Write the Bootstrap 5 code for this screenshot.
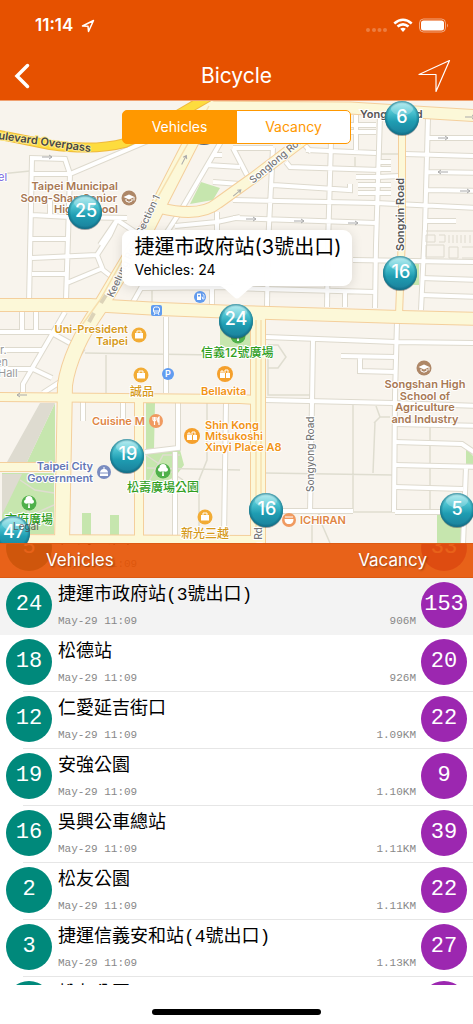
<!DOCTYPE html>
<html lang="zh-Hant">
<head>
<meta charset="utf-8">
<meta name="viewport" content="width=device-width, initial-scale=1">
<title>Bicycle</title>
<link href="https://cdn.jsdelivr.net/npm/bootstrap@5.3.0/dist/css/bootstrap.min.css" rel="stylesheet">
<style>
  body { font-family: Inter, "Noto Sans CJK TC", sans-serif; background: #fff; color: #000; }
  .topbar { background: #e65100; color: #fff; }
  .status { height: 52px; padding: 0 24px 0 35px; font-size: 17px; font-weight: 600; }
  .navrow { height: 48px; padding: 0 20px 0 12px; }
  .navrow h1 { font-size: 21px; font-weight: 400; line-height: 28px; }
  .iconbtn { width: 36px; height: 36px; line-height: 0; color: #fff; }
  .backbtn { width: 44px; }
  .mapbox { height: 443px; background: #f8f4ed; border-top: 1px solid #f0a070; }
  .mapart { width: 100%; height: 100%; }
  .switcher { top: 9px; left: 0; right: 0; margin: auto; width: 229px; height: 34px; z-index: 2; }
  .switcher .btn { --bs-btn-color: #ff9800; --bs-btn-border-color: #ff9800; --bs-btn-bg: #fff;
    --bs-btn-active-bg: #ff9800; --bs-btn-active-border-color: #ff9800; --bs-btn-active-color: #fff;
    --bs-btn-hover-color: #ff9800; --bs-btn-hover-border-color: #ff9800;
    width: 50%; padding: 0; font-size: 14px; line-height: 31px; border-radius: 5px; }
  .callout { top: 129px; left: 0; right: 0; margin: auto; width: 230px; height: 56px; padding: 4px 13px;
    background: rgba(255,255,255,.97); border-radius: 9px; box-shadow: 0 2px 12px rgba(0,0,0,.12); }
  .callout strong { display: block; font-weight: 400; font-size: 20px; line-height: 27px; white-space: nowrap; }
  .callout span { display: block; font-size: 14px; line-height: 18px; }
  .callout svg { top: 55px; left: 92px; }
  .listhead { height: 35px; background: rgba(230,81,0,.9); color: #fff; padding: 0 46px; font-size: 17px;
    text-shadow: 1px 1px 2px rgba(0,0,0,.35); border-bottom: 1px solid #dc5a14; border-top: 1px solid #dc5a14; z-index: 2; }
  .stations { font-family: "Liberation Mono", "Noto Sans CJK TC", monospace; scrollbar-width: none; min-height: 0; }
  .stations::-webkit-scrollbar { display: none; }
  .station { height: 57px; padding: 4px 6px 0; position: relative; }
  .station:first-child { margin-top: -22px; }
  .station::after { content: ""; position: absolute; left: 23px; right: 0; bottom: 0; height: 1px; background: #e6e6e6; }
  .station.chosen { background: #f3f3f3; }
  .station.chosen::after { display: none; }
  .disc { width: 46px; height: 46px; border-radius: 50%; color: #fff; font-size: 22px; line-height: 45px; text-align: center; }
  .bikes { background: #00897b; }
  .docks { background: #9c27b0; }
  .info { padding: 0 5px 0 6px; }
  .sname { font-size: 18px; line-height: 26px; margin-bottom: 6px; }
  .smeta { font-size: 11px; line-height: 14px; color: #888; }
  .homebar { height: 39px; }
  .homebar span { width: 169px; height: 6px; border-radius: 3px; background: #000; margin-top: 24px; }
  .case { stroke: #dedace; stroke-width: 6; }
  .lane { stroke: #fff; stroke-width: 4; }
  .lbl { font-size: 11px; font-weight: 600; paint-order: stroke; stroke: #fff; stroke-width: 2px; stroke-linejoin: round; }
  .cjk { font-size: 12px; font-weight: 500; }
  .street { font-size: 11px; font-weight: 500; fill: #777; paint-order: stroke; stroke: #fff; stroke-width: 2px; }
  .brown { fill: #a87853; } .gold { fill: #d69a1c; } .orange { fill: #f29314; } .green { fill: #2f9e1c; }
  .blue { fill: #6376b5; } .food { fill: #e08543; } .dim { fill: #999; font-weight: 400; }
  .pinnum { font-size: 18px; font-weight: 500; fill: #fff; text-anchor: middle; }
</style>
</head>
<body>
<div class="d-flex flex-column vh-100 overflow-hidden">
  <header class="topbar flex-shrink-0">
    <div class="status d-flex align-items-center justify-content-between">
      <div class="d-flex align-items-center gap-2"><span>11:14</span>
        <svg width="14" height="14" viewBox="0 0 14 14" fill="none" stroke="#fff" stroke-width="1.5" stroke-linejoin="round"><path d="M1.500 7 12.500 1.500 7.500 12.500 7 7.200Z"/></svg>
      </div>
      <svg width="84" height="18" viewBox="0 0 84 18">
        <g fill="#fff" opacity=".25"><circle cx="3" cy="13" r="2"/><circle cx="9" cy="13" r="2"/><circle cx="14.500" cy="13" r="2"/><circle cx="20" cy="13" r="2"/></g>
        <g fill="none" stroke="#fff" stroke-width="2.600"><path d="M29.300 6.500Q38 -1 46.700 6.500"/><path d="M32.500 9.600Q38 5 43.500 9.600"/></g><path d="M35.200 11.800Q38 9.700 40.800 11.800L38 15Z" fill="#fff"/>
        <rect x="54.500" y="2" width="26" height="13" rx="4" fill="none" stroke="#fff" stroke-opacity=".5"/><rect x="56" y="3.500" width="23" height="10" rx="2.500" fill="#fff"/><path d="M82 6.500v4q2-2 0-4" fill="#fff" opacity=".5"/>
      </svg>
    </div>
    <nav class="navrow d-flex align-items-center justify-content-between" aria-label="Main">
      <button class="iconbtn backbtn btn p-0 border-0 text-start" type="button" aria-label="Back"><svg width="20" height="26" viewBox="0 0 20 26" fill="none" stroke="#fff" stroke-width="3.500"><path d="M15.500 2.500 5 13 15.500 23.500" stroke-linecap="round"/></svg></button>
      <h1 class="m-0">Bicycle</h1>
      <button class="iconbtn btn p-0 border-0" type="button" aria-label="My location"><svg width="36" height="36" viewBox="0 0 36 36" fill="none" stroke="#fff" stroke-width="1.200" stroke-linejoin="round"><path d="M2 16.500 32.500 2.500 19 33.500V16.500Z"/></svg></button>
    </nav>
  </header>

  <section class="mapbox position-relative flex-shrink-0" aria-label="Map">
    <svg class="mapart d-block" viewBox="0 101 473 442" preserveAspectRatio="xMidYMid slice">
      <defs>
        <linearGradient id="ball" x1="0" y1="0" x2="0" y2="1"><stop offset="0" stop-color="#a5eaee"/><stop offset=".3" stop-color="#50c6d3"/><stop offset=".6" stop-color="#1f9db2"/><stop offset="1" stop-color="#1a7f9a"/></linearGradient>
        <radialGradient id="rim"><stop offset=".82" stop-color="#0b5d74" stop-opacity="0"/><stop offset="1" stop-color="#0b5d74" stop-opacity=".6"/></radialGradient>
        <g id="pin"><ellipse cy="1" rx="17" ry="17" fill="#234" opacity=".45"/><circle r="17" fill="url(#ball)"/><circle r="17" fill="url(#rim)"/><ellipse cy="-9" rx="11" ry="6.500" fill="#fff" opacity=".25"/></g>
        <g id="bag"><circle r="7.500" fill="#f2ac35"/><path d="M-4-2h8v5.500h-8Z" fill="#fff"/><path d="M-2-2v-2h4v2" fill="none" stroke="#fff"/></g>
        <g id="mall"><circle r="8" fill="#f5a02c"/><path d="M-5-1h5v5h-5ZM1-1h4v5h-4Z" fill="#fff"/><path d="M-4-1v-2h2v2M0-1v-3h3v3" fill="none" stroke="#fff"/></g>
        <g id="tree"><circle r="7.500" fill="#4fb04a"/><path d="M-4.500 0a2.500 2.500 0 0 1 1-3.500a3.500 3.500 0 0 1 7 0a2.500 2.500 0 0 1 1 3.500q-2 1.500-4 0l.5 5h-2l.5-5q-2 1.500-4 0Z" fill="#fff"/></g>
        <g id="school"><circle r="7.500" fill="#ae8767"/><path d="M-5.500-1 0-3.500 5.500-1 0 1.500Z" fill="#fff"/><path d="M-3 1v2q3 2.500 6 0v-2M5-1v3.500" fill="none" stroke="#fff"/></g>
        <path id="arrow" d="M-5 0H5M2-2 5 0 2 2" fill="none" stroke="#aaa"/>
        <g id="streets">
          <path d="M29 303 32 158 65 159 70 174 66 300M30 174H70L143 143 180 128M32 215 70 217 127 218M31 239H66M32 258 97 255 110 235 117 220 135 232M117 220 100 245M97 255 103 270 112 277M32 274H67M67 283 103 268M50 217V200"/>
          <path d="M222 140 180 212 167 232M207 165 240 167M213 182 240 184M213 155H222M217 230V212M240 217 217 222 175 226M233 148 247 175M233 148H273M303 143 311 152"/>
          <path d="M273 148 268 245 267 306M331 142 328 245 327 307M356 115V150M380 115 376 245 375 308M428 118 425 228 421 310M306 150 376 153M405 154 473 156M428 138H480M340 132H376M340 125H376M286 162 290 167 380 170M273 185 350 190V184M233 200 376 203 480 208M428 172 480 173M428 190 480 191M233 218 376 223M425 221H456M356 177H378M358 185H391M358 193H391M380 162H391M380 169H391M378 177 400 176"/>
          <path d="M353 260 480 262M230 288 375 292M132 304 141 288 233 287M212 287V306M345 292V307M421 278 480 280M421 295 480 297M266 337 396 342 480 343M397 322 395 395 394 512M313 340 312 402 310 512M166 317V393M341 356 396 357M360 357V371L396 372"/>
          <path d="M22 312V332M36 312V332M0 332H50L70 343M65 312 23 384V397M0 350H43M0 369H33L52 378M83 348 60 382 43 393M265 400 393 403 480 406M395 424 480 426M395 442 462 444 480 456M395 465 480 467M395 487 463 489M466 467 463 545M395 512H463M263 511H353M145 452 178 448V403M175 452V537M226 403 224 537M83 402V421M123 402V425"/>
        </g>
      </defs>
      <rect y="101" width="473" height="443" fill="#f8f4ed"/>
      <g fill="#c6e6ae"><path d="M201 182 220 188 213 200 190 204ZM55 403V462H27ZM2 473H54V534H2ZM146 403H155L154 449H146ZM146 452 180 450 184 465 175 477 146 490ZM82 513H91V535H82ZM110 515H119V535H110ZM437 515H461V543H437ZM466 448 473 456V464H466ZM413 263H419V285H413ZM220 313H251V347H220Z"/></g>
      <path d="M40 403H55L27 462H7ZM2 474H22L2 515Z" fill="#dedbd0"/>
      <path d="M353 405V511M265 473 393 475M375 422 373 473M376 406 380 417 390 417M380 417 374 423M430 425V512M147 468 240 470M207 403V460L199 480V537M85 353 215 355M106 355V395M152 290V305M353 512H395M0 174 30 171M268 345H278L286 357 278 368H268M268 345V395H311M355 157V168M380 154H400M312 515V543M320 513 312 525M320 520 330 543M146 455 183 480M148 483 163 455 180 455M20 480 35 490 54 493M20 520 54 505M28 505V534" fill="none" stroke="#dfddd0" stroke-width="1.500"/>
      <g fill="none"><use href="#streets" class="case"/><use href="#streets" class="lane"/></g>
      <g fill="none" stroke="#dedace"><path d="M426 231H473M426 235H435V242H426ZM439 235H445V242H439M449 235V243M453 235V243M457 235V243M461 235V243M465 235V243M470 235V243M426 245H444V257H426ZM449 247H458V258H449ZM462 247H475V258H462"/></g>
      <g fill="none" stroke-linejoin="round">
        <g stroke="#f4cf9c">
          <path d="M212 101 147 228 100 307Q70 350 65 385L62 543" stroke-width="16"/>
          <path d="M-5 305H90L160 309 236 312 400 317 480 319" stroke-width="14"/>
          <path d="M-5 397 240 399 258 400M-5 467H60M-5 539 258 540" stroke-width="10"/>
          <path d="M139 399V539" stroke-width="10"/><path d="M258 312V545" stroke-width="16"/>
          <path d="M402 110V235L399 315" stroke-width="8"/><path d="M190 107 350 108 480 116" stroke-width="13"/>
          <path d="M160 208Q200 218 218 203L253 178 303 140 350 108" stroke-width="12"/>
        </g>
        <g stroke="#fcf8d8">
          <path d="M212 101 147 228 100 307Q70 350 65 385L62 543" stroke-width="14"/>
          <path d="M-5 305H90L160 309 236 312 400 317 480 319" stroke-width="12"/>
          <path d="M-5 397 240 399 258 400M-5 467H60M-5 539 258 540" stroke-width="8"/>
          <path d="M139 399V539" stroke-width="8"/><path d="M258 312V545" stroke-width="14"/>
          <path d="M402 110V235L399 315" stroke-width="6"/><path d="M190 107 350 108 480 116" stroke-width="11"/>
          <path d="M160 208Q200 218 218 203L253 178 303 140 350 108" stroke-width="10"/>
        </g>
        <path d="M209 106 100 300 82 325M256 320V540M261 320V540" stroke="#f6dfae" stroke-width="1.500"/>
        <path d="M106 295 101 303M94 313 89 322" stroke="#dcd3b8" stroke-width="4"/>
        <path d="M-5 134 50 145Q95 151 125 143L150 131 210 96" stroke="#efb93d" stroke-width="10"/>
        <path d="M-5 134 50 145Q95 151 125 143L150 131 210 96" stroke="#fddc3e" stroke-width="8"/>
      </g>
      <use href="#arrow" x="47" y="157"/><use href="#arrow" x="443" y="138"/><use href="#arrow" x="470" y="117"/><use href="#arrow" x="465" y="191"/><use href="#arrow" x="251" y="219"/><use href="#arrow" x="299" y="221"/><use href="#arrow" x="353" y="223"/>
      <use href="#arrow" transform="translate(184 160) rotate(-62)"/><use href="#arrow" transform="translate(237 193) rotate(-40)"/><use href="#arrow" transform="translate(443 172) rotate(180)"/><use href="#arrow" transform="translate(22 395) rotate(180)"/>

      <text class="street" style="font-weight:600;fill:#444;stroke:#fde98a" transform="translate(-2 139) rotate(8)">ulevard Overpass</text>
      <text class="street" style="font-weight:600;fill:#555" x="360" y="118">Yongji Road</text>
      <text class="street" style="font-size:10px" transform="translate(253 184) rotate(-40)">Songlong Road</text>
      <text class="street" style="font-weight:600;fill:#555" transform="translate(404 251) rotate(-90)">Songxin Road</text>
      <text class="street" style="font-size:10px" transform="translate(314 492) rotate(-90)">Songyong Road</text>
      <text class="street" style="font-size:10px" transform="translate(262 558) rotate(-90)">ren Rd</text>
      <text class="street" style="font-size:10px" transform="translate(113 298) rotate(-65)">Keelung Road Section 1</text>
      <g class="lbl">
        <text x="-2" y="181" fill="#7465e0" font-weight="400">el</text>
        <g class="brown" text-anchor="end"><text x="118" y="190">Taipei Municipal</text><text x="117" y="202">Song-Shan Senior</text><text x="118" y="213">High School</text></g>
        <g class="gold" text-anchor="end"><text x="128" y="333">Uni-President</text><text x="128" y="345">Taipei</text></g>
        <g class="dim"><text x="0" y="354">r.</text><text x="-5" y="366">en</text><text x="-2" y="377">Hall</text></g>
        <text class="gold cjk" x="130" y="396">誠品</text>
        <text class="green cjk" x="201" y="357">信義12號廣場</text>
        <text class="orange" x="201" y="395">Bellavita</text>
        <g class="orange"><text x="205" y="429">Shin Kong</text><text x="205" y="440">Mitsukoshi</text><text x="205" y="451">Xinyi Place A8</text></g>
        <text class="food" x="92" y="425">Cuisine M</text>
        <g class="blue" text-anchor="end"><text x="93" y="470">Taipei City</text><text x="93" y="482">Government</text></g>
        <text class="green cjk" x="127" y="492">松壽廣場公園</text>
        <text class="green cjk" x="5" y="524">市府廣場</text>
        <text class="gold cjk" x="181" y="538">新光三越</text>
        <text class="food" x="300" y="524">ICHIRAN</text>
        <g class="brown" text-anchor="middle"><text x="425" y="388">Songshan High</text><text x="425" y="400">School of</text><text x="425" y="411">Agriculture</text><text x="425" y="423">and Industry</text></g>
      </g>
      <use href="#school" x="129" y="198"/><use href="#school" x="424" y="368"/>
      <use href="#bag" x="139" y="335"/><use href="#bag" x="141" y="375"/><use href="#bag" x="205" y="517"/>
      <use href="#mall" x="225" y="374"/><use href="#mall" x="192" y="436"/>
      <use href="#tree" x="163" y="471"/><use href="#tree" x="29" y="503"/><use href="#tree" x="238" y="336"/>
      <g><circle cx="200" cy="297" r="6" fill="#619cf0"/><path d="M197 293.500h4v6.500h-4Z" fill="#fff"/><path d="M198 295h2v1.500h-2Z" fill="#619cf0"/><path d="M201.500 297h1v2h1.500v-4l-1.500-1" fill="none" stroke="#fff" stroke-width=".8"/></g>
      <g><rect x="151" y="305" width="11" height="11" rx="2" fill="#619cf0"/><rect x="153.500" y="307" width="6" height="6" rx="2" fill="none" stroke="#fff"/><path d="M154 311h5M154 315l1-2M159 315l-1-2" stroke="#fff"/></g>
      <circle cx="168" cy="374" r="6" fill="#619cf0"/><text x="165" y="377" font-size="9" font-weight="600" fill="#fff">P</text>
      <g><circle cx="156" cy="421" r="7" fill="#f09a60"/><path d="M153 417v3q1.500 2 3 0v-3M154.500 417v8M159 425v-8q-2 1-1 5h1" fill="none" stroke="#fff" stroke-width="1.200"/></g>
      <g><circle cx="289" cy="520" r="7" fill="#f09a60"/><path d="M284.500 519h9q0 4-3 5h-3q-3-1-3-5Z" fill="#fff"/><path d="M285 517h8" stroke="#fff"/></g>
      <g><circle cx="104" cy="472" r="7" fill="#7a8cc0"/><path d="M100 476v-4q1-3 3.500-3v-2h1v2q2.500 0 3.500 3v4Z" fill="#fff"/><path d="M100 473h8" stroke="#7a8cc0"/></g>

      <path d="M196 142a8 3 0 0 0 16 0Z" fill="#345" opacity=".8"/>
      <use href="#pin" x="402" y="118"/><text class="pinnum" x="402" y="123">6</text>
      <use href="#pin" x="85" y="212"/><text class="pinnum" x="86" y="217">25</text>
      <use href="#pin" x="400" y="273"/><text class="pinnum" x="401" y="278">16</text>
      <use href="#pin" x="236" y="321"/><text class="pinnum" x="236" y="325">24</text>
      <use href="#pin" x="127" y="456"/><text class="pinnum" x="128" y="460">19</text>
      <use href="#pin" x="266" y="510"/><text class="pinnum" x="267" y="515">16</text>
      <use href="#pin" x="457" y="510"/><text class="pinnum" x="457" y="515">5</text>
      <use href="#pin" x="13" y="533"/><text class="pinnum" x="14" y="538">47</text>
      <text x="13" y="530" font-size="10" fill="#444" opacity=".8">Legal</text>
    </svg>

    <div class="switcher btn-group position-absolute" role="group" aria-label="Pin value">
      <input class="btn-check" type="radio" name="value" id="v1" checked><label class="btn" for="v1">Vehicles</label>
      <input class="btn-check" type="radio" name="value" id="v2"><label class="btn" for="v2">Vacancy</label>
    </div>
    <div class="callout position-absolute">
      <strong>捷運市政府站(3號出口)</strong><span>Vehicles: 24</span>
      <svg class="position-absolute" width="46" height="14" viewBox="0 0 46 14"><path d="M0 0Q7 0 11 4L20 12Q23 15 26 12L35 4Q39 0 46 0Z" fill="#fff"/></svg>
    </div>
  </section>

  <section class="position-relative flex-fill d-flex flex-column overflow-hidden">
    <div class="listhead position-absolute top-0 start-0 end-0 d-flex justify-content-between align-items-center"><span>Vehicles</span><span>Vacancy</span></div>
    <div class="stations flex-fill overflow-auto">
      <div class="station d-flex align-items-start"><div class="disc bikes">5</div><div class="info flex-fill"><div class="sname">松壽公園</div><div class="smeta d-flex justify-content-between"><span>May-29 11:09</span></div></div><div class="disc docks">33</div></div>
      <div class="station chosen d-flex align-items-start"><div class="disc bikes">24</div><div class="info flex-fill"><div class="sname">捷運市政府站(3號出口)</div><div class="smeta d-flex justify-content-between"><span>May-29 11:09</span><span>906M</span></div></div><div class="disc docks">153</div></div>
      <div class="station d-flex align-items-start"><div class="disc bikes">18</div><div class="info flex-fill"><div class="sname">松德站</div><div class="smeta d-flex justify-content-between"><span>May-29 11:09</span><span>926M</span></div></div><div class="disc docks">20</div></div>
      <div class="station d-flex align-items-start"><div class="disc bikes">12</div><div class="info flex-fill"><div class="sname">仁愛延吉街口</div><div class="smeta d-flex justify-content-between"><span>May-29 11:09</span><span>1.09KM</span></div></div><div class="disc docks">22</div></div>
      <div class="station d-flex align-items-start"><div class="disc bikes">19</div><div class="info flex-fill"><div class="sname">安強公園</div><div class="smeta d-flex justify-content-between"><span>May-29 11:09</span><span>1.10KM</span></div></div><div class="disc docks">9</div></div>
      <div class="station d-flex align-items-start"><div class="disc bikes">16</div><div class="info flex-fill"><div class="sname">吳興公車總站</div><div class="smeta d-flex justify-content-between"><span>May-29 11:09</span><span>1.11KM</span></div></div><div class="disc docks">39</div></div>
      <div class="station d-flex align-items-start"><div class="disc bikes">2</div><div class="info flex-fill"><div class="sname">松友公園</div><div class="smeta d-flex justify-content-between"><span>May-29 11:09</span><span>1.11KM</span></div></div><div class="disc docks">22</div></div>
      <div class="station d-flex align-items-start"><div class="disc bikes">3</div><div class="info flex-fill"><div class="sname">捷運信義安和站(4號出口)</div><div class="smeta d-flex justify-content-between"><span>May-29 11:09</span><span>1.13KM</span></div></div><div class="disc docks">27</div></div>
      <div class="station d-flex align-items-start"><div class="disc bikes">8</div><div class="info flex-fill"><div class="sname">松友公園</div><div class="smeta d-flex justify-content-between"><span>May-29 11:09</span><span>1.15KM</span></div></div><div class="disc docks">12</div></div>
    </div>
  </section>
  <footer class="homebar d-flex justify-content-center flex-shrink-0"><span></span></footer>
</div>
<script src="https://cdn.jsdelivr.net/npm/bootstrap@5.3.0/dist/js/bootstrap.bundle.min.js"></script>
</body>
</html>
